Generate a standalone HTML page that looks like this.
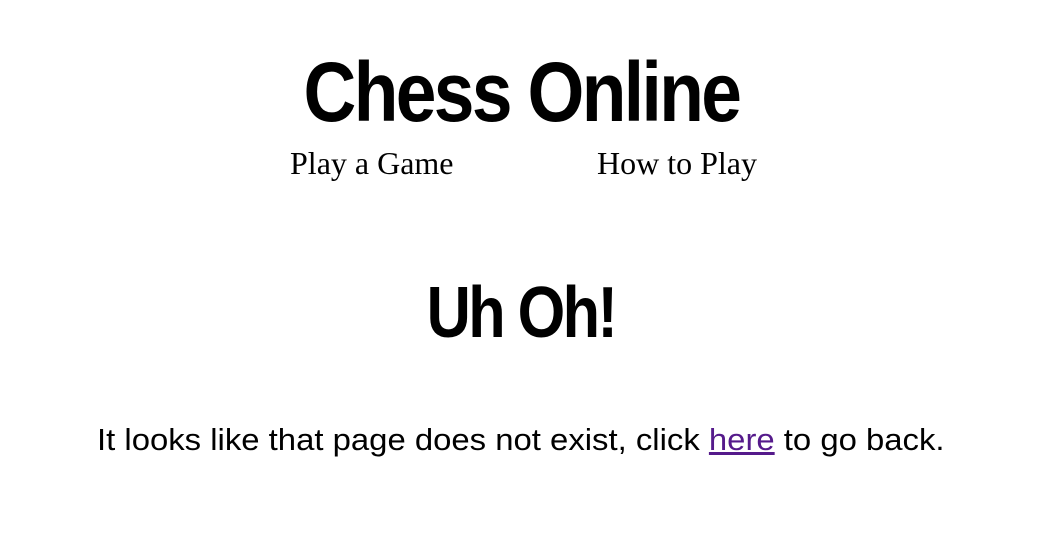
<!DOCTYPE html>
<html><head><meta charset="utf-8"><style>
body{margin:0;width:1042px;height:540px;background:#fff;position:relative;overflow:hidden;font-family:"Liberation Sans",sans-serif;color:#000}
.c{position:absolute;left:0;width:1042px;text-align:center;white-space:nowrap}
.t{display:inline-block;font-weight:bold;letter-spacing:-3px}
a{color:#551a8b}
</style></head><body>
<div class="c" style="top:44px"><span class="t" style="font-size:84px;line-height:96px;transform:scaleX(0.87)">Chess Online</span></div>
<div style="position:absolute;left:290px;top:145px;font-family:'Liberation Serif',serif;font-size:32px">Play a Game</div>
<div style="position:absolute;left:597px;top:145px;font-family:'Liberation Serif',serif;font-size:32px">How to Play</div>
<div class="c" style="top:271px"><span class="t" style="font-size:72px;line-height:84px;transform:scaleX(0.85)">Uh Oh!</span></div>
<div class="c" style="top:422px;font-size:31px;line-height:36px"><span style="display:inline-block;transform:scaleX(1.06)">It looks like that page does not exist, click <a href="#">here</a> to go back.</span></div>
</body></html>
